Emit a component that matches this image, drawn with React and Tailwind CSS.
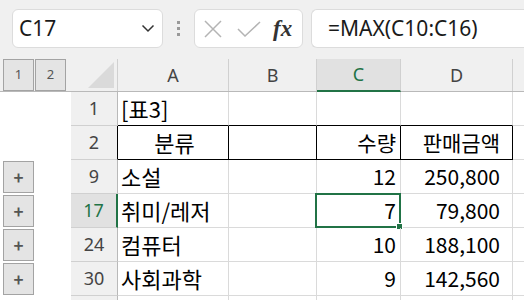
import React from 'react';

const COLS = ['A', 'B', 'C', 'D'];
const GRID = 'grid grid-cols-[71px_47px_111px_88px_84px_112px_1fr]';

const ROWS = [
  { n: '1', a: '[표3]', c: '', d: '' },
  { n: '2', a: '분류', c: '수량', d: '판매금액', head: true },
  { n: '9', a: '소설', c: '12', d: '250,800', plus: true },
  { n: '17', a: '취미/레저', c: '7', d: '79,800', plus: true, sel: true },
  { n: '24', a: '컴퓨터', c: '10', d: '188,100', plus: true },
  { n: '30', a: '사회과학', c: '9', d: '142,560', plus: true },
  { n: '', a: '', c: '', d: '' },
];

function OutlineBtn({ children, big }) {
  return (
    <div className={`w-[31px] h-[32px] bg-[#e4e4e4] border border-[#a3a3a3] flex items-center justify-center text-[#555] ${big ? 'text-[17px] font-bold' : 'text-[13px]'}`}>
      {children}
    </div>
  );
}

function Toolbar() {
  return (
    <div className="h-[59px] bg-[#f0f0f0] flex items-start pt-[9px] pl-[12px] font-['Noto_Sans',sans-serif]">
      <div className="w-[151px] h-[39px] bg-white border border-[#dcdcdc] rounded-[6px] flex items-center justify-between pl-[6px] pr-[7px]">
        <span className="text-[21px] text-[#1a1a1a] leading-none">C17</span>
        <svg width="14" height="9" viewBox="0 0 14 9"><path d="M1.5 1.5 7 7l5.5-5.5" fill="none" stroke="#333" strokeWidth="1.5" /></svg>
      </div>
      <div className="w-[31px] h-[39px] flex flex-col items-center justify-center gap-[3px]">
        <span className="w-[3px] h-[3px] bg-[#999]" />
        <span className="w-[3px] h-[3px] bg-[#999]" />
        <span className="w-[3px] h-[3px] bg-[#999]" />
      </div>
      <div className="w-[109px] h-[39px] bg-white border border-[#dcdcdc] rounded-[6px] flex items-center pl-[9px] gap-[15px]">
        <svg width="18" height="18" viewBox="0 0 18 18"><path d="M1 1l16 16M17 1 1 17" stroke="#b4b4b4" strokeWidth="1.5" /></svg>
        <svg width="24" height="16" viewBox="0 0 24 16"><path d="M1 8l7 7L23 1" fill="none" stroke="#b4b4b4" strokeWidth="1.5" /></svg>
        <span className="font-['Liberation_Serif',serif] italic font-bold text-[23px] text-[#333] leading-none -ml-[3px]">fx</span>
      </div>
      <div className="ml-[8px] flex-1 h-[39px] bg-white border border-[#dcdcdc] rounded-l-[6px] border-r-0 flex items-center pl-[16px]">
        <span className="text-[21px] text-[#1a1a1a] leading-none">=MAX(C10:C16)</span>
      </div>
    </div>
  );
}

function HeaderRow() {
  return (
    <div className={`${GRID} h-[33px] bg-[#f0f0f0] border-b border-[#b9b9b9] font-['Noto_Sans',sans-serif]`}>
      <div className="flex gap-[1px] pl-[3px]">
        <OutlineBtn>1</OutlineBtn>
        <OutlineBtn>2</OutlineBtn>
      </div>
      <div className="relative border-r border-[#d0d0d0]">
        <svg className="absolute right-[3px] bottom-[3px]" width="26" height="26" viewBox="0 0 26 26"><polygon points="26,0 26,26 0,26" fill="#dadada" /></svg>
      </div>
      {COLS.map((c) => (
        <div
          key={c}
          className={
            c === 'C'
              ? 'flex items-center justify-center text-[18px] bg-[#e1e1e1] text-[#217346] border-r border-[#d0d0d0] border-b-2 border-b-[#217346] -mb-px'
              : 'flex items-center justify-center text-[18px] text-[#444] border-r border-[#d0d0d0]'
          }
        >
          {c}
        </div>
      ))}
      <div />
    </div>
  );
}

function Row({ r, idx }) {
  const line = 'border-[#dadada]';
  const cell = r.head ? 'border-r border-b border-black' : idx === 0 ? `border-r ${line} border-b border-b-black` : `border-r border-b ${line}`;
  return (
    <div className={`${GRID} h-[34px] font-['Noto_Sans_CJK_KR','Noto_Sans',sans-serif] text-[21px] text-black`}>
      <div className="pl-[3px] pt-px">{r.plus && <OutlineBtn big>+</OutlineBtn>}</div>
      <div
        className={
          r.sel
            ? "flex items-center justify-center bg-[#e1e1e1] text-[#217346] text-[18px] font-['Noto_Sans',sans-serif] border-b border-[#d0d0d0] border-r-2 border-r-[#217346]"
            : `flex items-center justify-center bg-[#f0f0f0] text-[#444] text-[18px] font-['Noto_Sans',sans-serif] border-b border-[#d0d0d0] border-r ${r.head ? 'border-r-black' : 'border-r-[#b9b9b9]'}`
        }
      >
        {r.n}
      </div>
      <div className={`flex items-center whitespace-nowrap pl-[3px] text-[22px] ${r.head ? 'justify-center' : ''} ${cell}`}>{r.a}</div>
      <div className={cell} />
      <div className={`relative flex items-center justify-end pr-[4px] ${cell}`}>
        {r.c}
        {r.sel && (
          <div className="absolute -left-[2px] -top-px -right-px -bottom-px border-2 border-[#217346]">
            <div className="absolute -right-[4px] -bottom-[4px] w-[7px] h-[7px] bg-[#217346] border border-white" />
          </div>
        )}
      </div>
      <div className={`flex items-center justify-end pr-[12px] ${cell}`}>{r.d}</div>
      <div className={`border-b ${line}`} />
    </div>
  );
}

export default function App() {
  return (
    <div className="w-[524px] h-[300px] overflow-hidden bg-white">
      <Toolbar />
      <HeaderRow />
      {ROWS.map((r, i) => (
        <Row key={i} r={r} idx={i} />
      ))}
    </div>
  );
}
